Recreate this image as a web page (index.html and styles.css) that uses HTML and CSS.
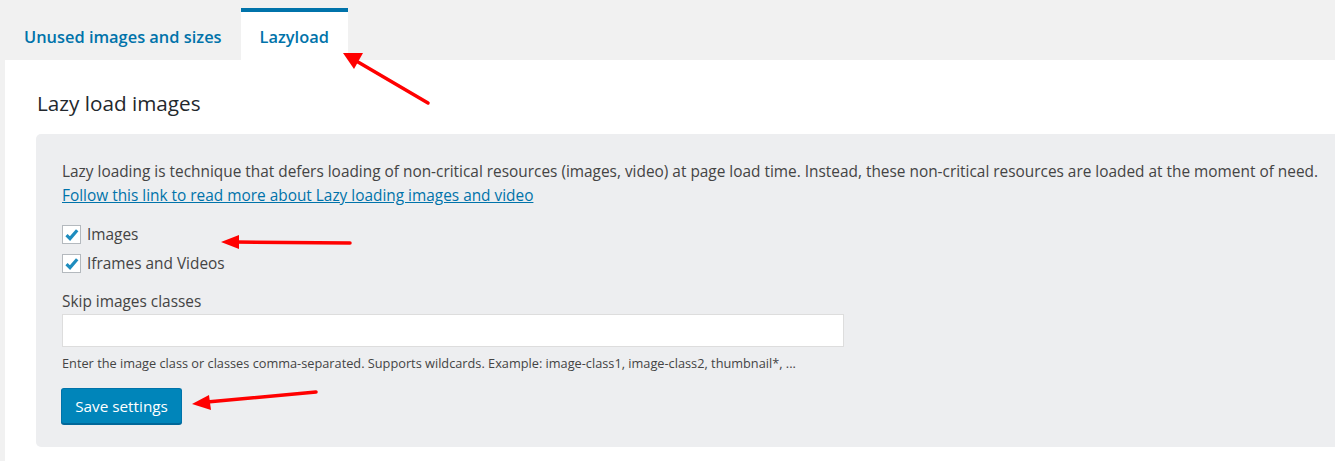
FILE: index.html
```html
<!DOCTYPE html>
<html lang="en">
<head>
<meta charset="utf-8">
<title>Lazyload settings</title>
<link rel="stylesheet" href="styles.css">
</head>
<body>
<div class="page">
  <nav class="tabs">
    <a class="tab" href="#">Unused images and sizes</a>
    <a class="tab tab-active" href="#">Lazyload</a>
  </nav>
  <main class="panel">
    <h2 class="title">Lazy load images</h2>
    <section class="box">
      <p class="intro">Lazy loading is technique that defers loading of non-critical resources (images, video) at page load time. Instead, these non-critical resources are loaded at the moment of need.<br><a class="link" href="#">Follow this link to read more about Lazy loading images and video</a></p>
      <label class="check-row">
        <span class="checkbox"><svg viewBox="0 0 20 20" width="20" height="20"><path d="M4.5 10.2 L8 13.6 L15.2 5.2" fill="none" stroke="#1e8cbe" stroke-width="3.2" stroke-linecap="butt" stroke-linejoin="miter"/></svg></span>
        <span class="check-label">Images</span>
      </label>
      <label class="check-row">
        <span class="checkbox"><svg viewBox="0 0 20 20" width="20" height="20"><path d="M4.5 10.2 L8 13.6 L15.2 5.2" fill="none" stroke="#1e8cbe" stroke-width="3.2" stroke-linecap="butt" stroke-linejoin="miter"/></svg></span>
        <span class="check-label">Iframes and Videos</span>
      </label>
      <div class="field-label">Skip images classes</div>
      <div class="input"></div>
      <p class="help">Enter the image class or classes comma-separated. Supports wildcards. Example: image-class1, image-class2, thumbnail*, ...</p>
      <button class="btn" type="button">Save settings</button>
    </section>
  </main>
  <svg class="arrows" viewBox="0 0 1335 461" width="1335" height="461">
    <g stroke="#f00" stroke-width="3.5" stroke-linecap="round" fill="#f00">
      <line x1="428" y1="103" x2="358" y2="62"/>
      <polygon stroke="none" points="343,53 363,53 354,69"/>
      <line x1="350" y1="243" x2="236" y2="242"/>
      <polygon stroke="none" points="221,242 239,235 239,249"/>
      <line x1="316" y1="392" x2="207" y2="402"/>
      <polygon stroke="none" points="192,404 209,395 211,410"/>
    </g>
  </svg>
</div>
</body>
</html>
```

FILE: styles.css
```css
html, body {
  margin: 0;
  padding: 0;
}
body {
  background: #f1f1f1;
  font-family: "Open Sans", "Noto Sans", sans-serif;
  color: #444;
  font-size: 15.4px;
}
.page {
  position: relative;
  width: 1335px;
  height: 461px;
  overflow: hidden;
}
.tabs {
  display: flex;
  padding: 8px 0 0 5px;
}
.tab {
  display: block;
  height: 48px;
  line-height: 50px;
  padding: 0 19px;
  border-top: 4px solid transparent;
  color: #0073aa;
  font-size: 16.4px;
  font-weight: 600;
  text-decoration: none;
}
.tab-active {
  background: #fff;
  border-top-color: #0073aa;
}
.panel {
  margin-left: 5px;
  background: #fff;
  padding: 29px 0 14px 31px;
}
.title {
  margin: 0 0 17px 1px;
  font-size: 20.7px;
  line-height: 28px;
  font-weight: 500;
  color: #23282d;
}
.box {
  background: #edeef0;
  border-radius: 5px 0 0 5px;
  padding: 26px 0 23px 26px;
}
.intro {
  margin: 0;
  line-height: 24px;
  white-space: nowrap;
}
.link {
  color: #0073aa;
}
.check-row {
  display: flex;
  align-items: center;
  gap: 6px;
  height: 29px;
}
.check-row:first-of-type {
  margin-top: 12px;
}
.checkbox {
  display: block;
  width: 19px;
  height: 19px;
  box-sizing: border-box;
  border: 1px solid #b4b9be;
  background: #fff;
  position: relative;
}
.checkbox svg {
  display: block;
  margin: -1px;
}
.field-label {
  margin-top: 14px;
  line-height: 20px;
}
.input {
  margin-top: 2px;
  width: 782px;
  height: 33px;
  box-sizing: border-box;
  border: 1px solid #ddd;
  background: #fff;
}
.help {
  margin: 7px 0 0;
  font-size: 12.75px;
  line-height: 18px;
}
.btn {
  display: block;
  margin: 16px 0 0 -1px;
  width: 121px;
  height: 36px;
  box-sizing: border-box;
  background: #0085ba;
  border: 1px solid #0073aa;
  border-bottom-color: #006799;
  box-shadow: 0 1px 0 #006799;
  border-radius: 3px;
  color: #fff;
  font-family: inherit;
  font-size: 15.3px;
  padding: 0;
}
.arrows {
  position: absolute;
  top: 0;
  left: 0;
  pointer-events: none;
}
```
